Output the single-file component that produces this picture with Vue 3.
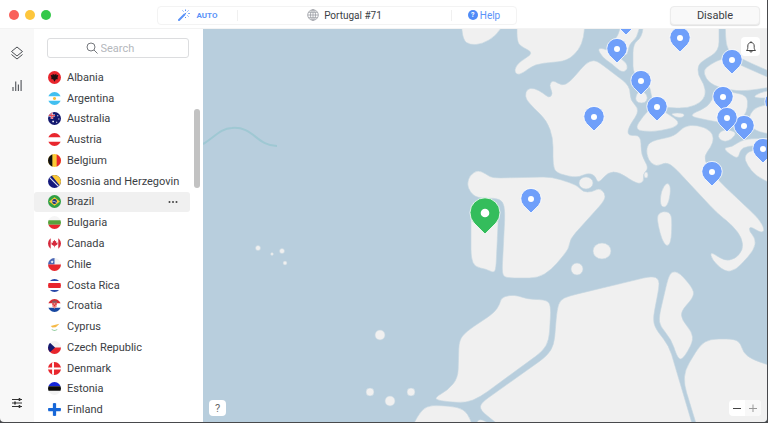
<template>
  <div class="window">
    <header class="titlebar">
      <div class="lights">
        <button class="light red" aria-label="Close"></button>
        <button class="light yellow" aria-label="Minimize"></button>
        <button class="light green" aria-label="Zoom"></button>
      </div>
      <div class="status">
        <button class="auto">
          <svg width="12" height="12" viewBox="0 0 12 12" fill="none" stroke="currentColor">
            <path d="M1 11l5.500-5.500" stroke-width="2" stroke-linecap="round" />
            <path d="M7 5l1.200-1.200M7.500.5v1.500M10.500 1.500l-1 1M11.800 4.500h-1.500M10.500 7.500l-1-1M4.500 1.500l1 1M7.500 8v1" />
          </svg>
          <span>AUTO</span>
        </button>
        <div class="server">
          <svg width="12" height="12" viewBox="0 0 12 12" fill="none" stroke="#9a9da3" stroke-width=".8">
            <circle cx="6" cy="6" r="5.300" />
            <ellipse cx="6" cy="6" rx="2.500" ry="5.300" />
            <path d="M6 .7v10.600M.7 6h10.600M1.500 3.300h9M1.500 8.700h9" />
          </svg>
          <span>Portugal #71</span>
        </div>
        <button class="help"><i>?</i><span>Help</span></button>
      </div>
      <button class="disable">Disable</button>
    </header>

    <div class="body">
      <nav class="rail">
        <button aria-label="Layers">
          <svg width="14" height="14" viewBox="0 0 14 14" fill="none" stroke="#4a4d52" stroke-linejoin="round">
            <path d="M7 1l5.500 4.500L7 10 1.500 5.500z" />
            <path d="M1.500 8.500L7 13l5.500-4.500" />
          </svg>
        </button>
        <button aria-label="Statistics">
          <svg width="14" height="14" viewBox="0 0 14 14" fill="none" stroke="#5c5f64" stroke-width="1.200">
            <path d="M3 13V9M5.700 13V3.500M8.400 13V6.500M11.100 13V2" />
          </svg>
        </button>
        <button class="last" aria-label="Preferences">
          <svg width="12" height="12" viewBox="0 0 12 12" fill="none" stroke="#333">
            <path d="M1 2.500h10M1 6h10M1 9.500h10" />
            <path d="M8.500 1v3M4 4.500v3M8.500 8v3" stroke-width="1.600" />
          </svg>
        </button>
      </nav>

      <aside class="sidebar">
        <label class="search" :class="{ filled: query }">
          <svg width="12" height="12" viewBox="0 0 12 12" fill="none" stroke="#75787d">
            <circle cx="5" cy="5" r="4" />
            <path d="M8 8l3.500 3.500" />
          </svg>
          <input v-model="query" type="text" placeholder="Search" aria-label="Search" />
        </label>
        <ul class="countries">
          <li v-for="c in filtered" :key="c.name" :class="{ active: c.name === selected }" @click="selected = c.name">
            <svg class="flag" width="13" height="13" viewBox="0 0 12 12">
              <clipPath :id="'clip-' + c.id"><circle cx="6" cy="6" r="6" /></clipPath>
              <g :clip-path="`url(#clip-${c.id})`">
                <path v-for="(s, i) in c.flag" :key="i" :fill="s[0]" :d="s[1]" />
              </g>
            </svg>
            <span>{{ c.name }}</span>
            <button v-if="c.name === selected" class="more" aria-label="More">
              <svg width="10" height="4" viewBox="0 0 10 4" fill="#444">
                <circle cx="1.500" cy="2" r="1" />
                <circle cx="5" cy="2" r="1" />
                <circle cx="8.500" cy="2" r="1" />
              </svg>
            </button>
          </li>
        </ul>
        <div class="scrollbar"></div>
      </aside>

      <main class="map">
        <svg class="world" viewBox="203 29 564 393" preserveAspectRatio="xMinYMin slice">
          <path class="route" d="M203 144C213 139 220 128 232 128C253 126 257 146 277 146" />
          <path v-for="(p, i) in land" :key="i" class="land" :d="rounded(p)" />
          <ellipse v-for="(e, i) in islands" :key="'i' + i" class="land" :cx="e[0]" :cy="e[1]" :rx="e[2]" :ry="e[3]" />
          <g v-for="(p, i) in pins" :key="'p' + i" :transform="`translate(${p[0]} ${p[1]})`">
            <path class="pin" d="M0 14L-7.500 6.500A10.200 10.200 0 1 1 7.500 6.500Z" />
            <circle r="3" fill="#fff" />
          </g>
          <g transform="translate(485 213)">
            <path class="pin current" d="M0 21L-11 10A15 15 0 1 1 11 10Z" />
            <circle r="4.300" fill="#fff" />
          </g>
        </svg>
        <button class="tool bell" aria-label="Notifications">
          <svg width="12" height="12" viewBox="0 0 12 12" fill="none" stroke="#444">
            <path d="M1.500 9.500C3 8 2.800 7 2.800 5C2.800 2.800 4.200 1.500 6 1.500S9.200 2.800 9.200 5C9.200 7 9 8 10.500 9.500ZM6 .3v1.200M4.800 10c.3 1.600 2.100 1.600 2.400 0" />
          </svg>
        </button>
        <button class="tool info">?</button>
        <div class="zoom">
          <button aria-label="Zoom out">
            <svg width="8" height="8" viewBox="0 0 8 8" stroke="#444"><path d="M0 4.500h8" /></svg>
          </button>
          <button class="plus" aria-label="Zoom in">
            <svg width="8" height="8" viewBox="0 0 8 8" stroke="#999"><path d="M0 4.500h8M4 .5v8" /></svg>
          </button>
        </div>
      </main>
    </div>
  </div>
</template>

<script setup>
import { ref, computed } from 'vue';

const query = ref('');
const selected = ref('Brazil');

const all = 'M0 0h12v12H0z';
const top3 = 'M0 0h12v4H0z';
const bottom3 = 'M0 8h12v4H0z';

// each flag is a stack of [fill, path] on a 12x12 grid
const countries = [
  { name: 'Albania', flag: [['#e8262d', all], ['#1c1011', 'M6 3.500L8 2.500 7.500 4 9.500 3.800 8.800 6 9 7.500 7.300 7.500 6 10 4.700 7.500 3 7.500 3.200 6 2.500 3.800 4.500 4 4 2.500z']] },
  { name: 'Argentina', flag: [['#fff', all], ['#41bff0', top3], ['#41bff0', bottom3], ['#f6bd3b', 'M6 4.500a1.500 1.500 0 1 0 .01 0z']] },
  { name: 'Australia', flag: [['#14196f', all], ['#fff', 'M0 2.300h6.500v1.900H0zM2.500 0h1.900v6.500H2.500z'], ['#e84b55', 'M0 2.800h6.500v.9H0zM3 0h.9v6.500H3zM1 1l4.500 4.500-.7.5L.5 1.500z'], ['#fff', 'M8.500 3h1v1h-1zM9.500 6h1v1h-1zM4 8h1.500v1.500H4zM7.500 9h1v1h-1z']] },
  { name: 'Austria', flag: [['#fff', all], ['#e8262d', top3], ['#e8262d', bottom3]] },
  { name: 'Belgium', flag: [['#fbca36', all], ['#111', 'M0 0h4v12H0z'], ['#e8262d', 'M8 0h4v12H8z']] },
  { name: 'Bosnia and Herzegovin', flag: [['#14197c', all], ['#fbca36', 'M3 0h9v11z'], ['#dfe4f5', 'M1.500 1.500l9.500 9.500-.8.800L.8 2.300z']] },
  { name: 'Brazil', flag: [['#2f9f45', all], ['#fbca36', 'M6 2l5 4-5 4-5-4z'], ['#26377c', 'M6 3.800a2.200 2.200 0 1 0 .01 0z'], ['#b8c6e3', 'M3.900 5.300q2.500-.1 4.200 1.500l-.2.500q-1.700-1.500-4.100-1.400z']] },
  { name: 'Bulgaria', flag: [['#f5f5f5', all], ['#56a33b', 'M0 4h12v4H0z'], ['#e8262d', bottom3]] },
  { name: 'Canada', flag: [['#fff', all], ['#d5293c', 'M0 0h2.500v12H0zM9.500 0H12v12H9.500zM6 2.500l.8 1.500.8-.4-.2 1.700 1.600-.3-.4 1 .5.500L7 8H6.300v1.500h-.6V8H5L2.900 6.500l.5-.5-.4-1 1.600.3-.2-1.700.8.4z']] },
  { name: 'Chile', flag: [['#f3f3f3', all], ['#4a66b5', 'M0 0h6v6H0z'], ['#fff', 'M3.800 2l.4 1.100h1.100l-.9.7.3 1.100-.9-.6-.9.600.3-1.100-.9-.7h1.100z'], ['#e8262d', 'M0 6h12v6H0z']] },
  { name: 'Costa Rica', flag: [['#fff', all], ['#2848a8', 'M0 0h12v1.900H0zM0 10.100h12V12H0z'], ['#e8262d', 'M0 3.800h12v4.400H0z']] },
  { name: 'Croatia', flag: [['#fff', all], ['#d92930', top3], ['#1747a0', bottom3], ['#ee8d87', 'M4 3h4v4L6 9 4 7z'], ['#8a5961', 'M4 1.500h4V3.500H4z'], ['#d92930', 'M4 4h1.300v1.300H4zM6.600 4H8v1.300H6.600zM5.300 5.300h1.300v1.300H5.300z']] },
  { name: 'Cyprus', flag: [['#fff', all], ['#f5b947', 'M2.500 5.500L6 4.500 10.500 3.500 8.500 5.500 7 6.800 4 7z'], ['#73bd82', 'M3 8q3 2.500 6 0L8 9.500 6 10 4 9.500z']] },
  { name: 'Czech Republic', flag: [['#f3f3f3', all], ['#e8262d', 'M0 6h12v6H0z'], ['#14196f', 'M0 0l6.500 6L0 12z']] },
  { name: 'Denmark', flag: [['#e8262d', all], ['#fff', 'M3.800 0h1.700v12H3.800zM0 5.100h12v1.800H0z']] },
  { name: 'Estonia', flag: [['#f3f3f3', all], ['#1426dc', top3], ['#0b0b0b', 'M0 4h12v4H0z']] },
  { name: 'Finland', flag: [['#fff', all], ['#1767d8', 'M4.500 0h3v12h-3zM0 4.500h12v3H0z']] },
].map((c, id) => ({ ...c, id }));

const filtered = computed(() => {
  const q = query.value.trim().toLowerCase();
  return countries.filter((c) => c.name.toLowerCase().includes(q));
});

// coastlines as corner points, rounded off when drawn
const land = [
  // Ireland, Great Britain
  [[461, 20], [463, 40], [470, 45], [482, 44], [496, 36], [506, 20]],
  [[517, 20], [517, 42], [522, 47], [534, 53], [519, 62], [514, 70], [517, 75], [523, 73], [535, 64], [567, 61], [579, 50], [584, 37], [585, 20]],
  // France
  [[525, 96], [527, 89], [534, 88], [543, 93], [549, 98], [553, 94], [549, 85], [553, 80], [562, 86], [570, 82], [586, 63], [594, 60], [600, 63], [630, 86], [630, 100], [640, 110], [628, 128], [628, 136], [641, 135], [641, 155], [649, 168], [643, 174], [644, 182], [637, 184], [619, 172], [608, 172], [598, 184], [595, 175], [587, 173], [577, 178], [556, 173], [553, 165], [553, 138], [547, 121], [528, 102]],
  // Low countries, Luxembourg
  [[597, 48], [606, 49], [626, 62], [628, 69], [622, 73], [611, 63], [603, 58]],
  [[610, 43], [618, 37], [622, 20], [641, 20], [637, 38], [629, 44], [627, 58]],
  [[635, 99], [638, 91], [645, 92], [648, 98], [645, 103], [638, 103]],
  // Germany
  [[644, 20], [642, 37], [633, 44], [633, 75], [650, 84], [652, 103], [668, 108], [688, 108], [700, 103], [706, 95], [704, 84], [698, 75], [698, 65], [704, 60], [719, 51], [719, 20]],
  // Switzerland, Liechtenstein
  [[634, 130], [643, 116], [654, 105], [668, 114], [680, 122], [674, 128], [652, 132]],
  [[670, 113], [685, 113], [683, 118], [675, 117]],
  // Poland, Czechia, Austria
  [[725, 20], [726, 45], [730, 52], [744, 60], [780, 76], [780, 20]],
  [[703, 73], [707, 66], [725, 57], [740, 65], [786, 85], [745, 91], [728, 90], [710, 84]],
  [[688, 116], [709, 106], [714, 95], [724, 91], [747, 95], [748, 107], [744, 117], [733, 124], [717, 122]],
  // Balkans
  [[718, 134], [724, 129], [737, 132], [732, 139], [725, 142], [719, 139]],
  [[752, 98], [760, 92], [780, 89], [780, 98]],
  [[750, 114], [756, 107], [780, 102], [780, 136], [755, 131], [748, 122]],
  [[722, 148], [732, 147], [743, 139], [780, 138], [780, 145], [747, 146], [740, 150], [738, 160]],
  [[744, 156], [751, 150], [780, 150], [780, 188], [756, 176], [747, 165]],
  // Italy
  [[646, 148], [651, 141], [675, 136], [684, 126], [697, 125], [710, 130], [714, 138], [711, 147], [704, 156], [707, 166], [720, 182], [759, 219], [765, 230], [761, 233], [750, 226], [749, 231], [756, 239], [754, 250], [736, 270], [725, 272], [712, 260], [710, 251], [724, 261], [735, 259], [743, 250], [742, 238], [733, 226], [716, 212], [674, 167], [666, 162], [656, 167], [648, 160]],
  // Corsica, Sardinia
  [[667, 182], [671, 187], [669, 202], [665, 208], [660, 205], [661, 191]],
  [[663, 211], [671, 213], [672, 224], [671, 242], [667, 247], [662, 240], [658, 225], [657, 215]],
  // Iberia
  [[467, 184], [470, 175], [478, 170], [486, 174], [492, 178], [552, 177], [577, 185], [583, 192], [592, 192], [599, 188], [605, 193], [605, 200], [570, 239], [569, 249], [551, 270], [538, 278], [506, 278], [502, 274], [505, 212], [503, 201], [495, 198], [477, 198], [470, 192]],
  [[471, 210], [472, 202], [490, 200], [499, 203], [496, 268], [494, 273], [486, 269], [475, 267], [471, 258]],
  // Maghreb
  [[434, 398], [448, 390], [458, 378], [459, 340], [467, 331], [494, 313], [500, 304], [501, 298], [510, 295], [519, 296], [527, 299], [548, 300], [551, 308], [549, 340], [543, 351], [480, 397], [466, 403], [440, 401]],
  [[557, 310], [560, 300], [569, 296], [652, 276], [659, 279], [659, 288], [653, 318], [655, 328], [669, 346], [694, 430], [505, 430], [480, 410], [481, 403], [547, 356], [554, 345]],
  [[668, 278], [672, 271], [680, 273], [694, 290], [693, 298], [681, 311], [682, 320], [692, 332], [693, 342], [683, 359], [678, 359], [671, 339], [660, 326], [659, 317]],
  [[698, 430], [684, 384], [685, 370], [700, 345], [710, 339], [735, 339], [741, 344], [743, 352], [751, 359], [780, 369], [780, 430]],
  [[410, 430], [422, 409], [432, 405], [458, 407], [468, 413], [474, 430]],
  [[475, 430], [478, 417], [500, 430]],
];

const islands = [
  [586, 183, 7, 6],
  [646, 175, 2, 3],
  [602, 251, 9, 8],
  [577, 269, 6, 6],
  [258, 248, 2.5, 2.5],
  [272, 254, 1.5, 1.5],
  [282, 251, 2.5, 2.5],
  [285, 263, 2, 2],
  [380, 335, 5, 5],
  [370, 392, 4, 4],
  [390, 401, 5, 5],
  [411, 392, 4, 4],
];

const pins = [
  [626, 21], [617, 49], [680, 38], [732, 60], [641, 81], [657, 107], [594, 117], [723, 97],
  [744, 126], [727, 118], [763, 149], [712, 172], [531, 199], [773, 21], [775, 102],
];

function rounded(points) {
  const n = points.length;
  let d = '';
  for (let i = 0; i < n; i++) {
    const p = points[i];
    const a = toward(p, points[(i + n - 1) % n]);
    const b = toward(p, points[(i + 1) % n]);
    d += `${i ? 'L' : 'M'}${a}Q${p.join(' ')} ${b}`;
  }
  return d + 'Z';
}

function toward(from, to) {
  const dx = to[0] - from[0];
  const dy = to[1] - from[1];
  const len = Math.hypot(dx, dy);
  const t = Math.min(0.5, 9 / len);
  return `${(from[0] + dx * t).toFixed(1)} ${(from[1] + dy * t).toFixed(1)}`;
}
</script>

<style>
body {
  background: #48494c;
}
</style>

<style scoped>
.window {
  display: flex;
  flex-direction: column;
  box-sizing: border-box;
  height: 100vh;
  padding: 0 1px 1px 0;
  overflow: hidden;
  font-family: Roboto, "Liberation Sans", sans-serif;
  font-size: 11px;
  color: #3b3e44;
}

button {
  display: flex;
  align-items: center;
  justify-content: center;
  padding: 0;
  border: none;
  background: none;
  font: inherit;
  color: inherit;
  cursor: pointer;
}

.titlebar {
  display: flex;
  align-items: center;
  justify-content: space-between;
  flex-shrink: 0;
  box-sizing: border-box;
  height: 29px;
  padding: 2px 7px 0 9px;
  border-bottom: 1px solid #f3f3f3;
  background: #fff;
}

.lights {
  display: flex;
  gap: 6px;
  width: 148px;
}

.light {
  width: 10px;
  height: 10px;
  border-radius: 50%;
}

.red {
  background: #f9605a;
}

.yellow {
  background: #fdc63c;
}

.green {
  background: #34c84a;
}

.status {
  display: flex;
  flex: 1;
  max-width: 360px;
  margin-right: auto;
  box-sizing: border-box;
  height: 19px;
  border: 1px solid #f3f3f3;
  border-radius: 4px;
}

.auto {
  gap: 7px;
  width: 79px;
  font-size: 8px;
  font-weight: 700;
  color: #5b93f8;
}

.server {
  display: flex;
  flex: 1;
  align-items: center;
  justify-content: center;
  gap: 5px;
  margin: 3px 0;
  border: solid #f0f0f0;
  border-width: 0 1px;
  font-size: 10px;
  color: #3b3e44;
}

.help {
  gap: 2px;
  width: 64px;
  font-size: 10px;
  color: #5b93f8;
}

.help i {
  width: 10px;
  border-radius: 50%;
  background: #4f8bf7;
  font-size: 7px;
  font-style: normal;
  font-weight: 700;
  line-height: 10px;
  text-align: center;
  color: #fff;
}

.disable {
  width: 90px;
  height: 19px;
  border: 1px solid #ececec;
  border-radius: 4px;
  background: #f9f9f9;
  box-shadow: 0 1px 1px #e2e2e2;
}

.body {
  display: flex;
  flex: 1;
  min-height: 0;
}

.rail {
  display: flex;
  flex-direction: column;
  align-items: center;
  gap: 18px;
  box-sizing: border-box;
  width: 34px;
  padding: 17px 0 13px;
  border-bottom-left-radius: 4px;
  background: #f8f8f8;
}

.rail .last {
  margin-top: auto;
}

.sidebar {
  position: relative;
  box-sizing: border-box;
  width: 169px;
  padding-top: 9px;
  overflow: hidden;
  background: #fff;
}

.search {
  display: flex;
  align-items: center;
  justify-content: center;
  gap: 3px;
  box-sizing: border-box;
  height: 20px;
  margin: 0 14px 9px 13px;
  border: 1px solid #dcdddf;
  border-radius: 3px;
}

.search input {
  width: 50px;
  padding: 1px 0 0;
  border: none;
  outline: none;
  background: none;
  font: inherit;
  color: #3b3e44;
}

.search.filled input {
  width: 100px;
}

.search input::placeholder {
  color: #b4b7bc;
  opacity: 1;
}

.countries {
  display: grid;
  grid-template-columns: minmax(0, 1fr);
  grid-auto-rows: 1fr;
  height: 353px;
  margin: 0 13px 0 0;
  padding: 0;
  list-style: none;
}

.countries li {
  display: flex;
  align-items: center;
  gap: 6px;
  padding: 0 12px 0 14px;
  border-radius: 3px;
  white-space: nowrap;
}

.countries li.active {
  background: #f0f0f0;
}

.flag {
  flex-shrink: 0;
}

.more {
  margin-left: auto;
}

.scrollbar {
  position: absolute;
  top: 80px;
  right: 3px;
  width: 6px;
  height: 79px;
  border-radius: 3px;
  background: #c2c2c2;
}

.map {
  position: relative;
  flex: 1;
  min-width: 0;
  overflow: hidden;
  border-bottom-right-radius: 4px;
  background: #b8cedd;
}

.world {
  display: block;
  width: 100%;
  height: 100%;
}

.land {
  fill: #f0f0f0;
  stroke: #c6d6e1;
  stroke-width: .6;
}

.route {
  fill: none;
  stroke: #9fc8d3;
  stroke-width: 2;
}

.pin {
  fill: #6f9ffa;
  stroke: #fff;
  stroke-width: .8;
}

.pin.current {
  fill: #34bd5c;
}

.tool {
  position: absolute;
  border-radius: 4px;
  background: #fff;
}

.bell {
  top: 8px;
  right: 7px;
  width: 19px;
  height: 19px;
}

.info {
  bottom: 6px;
  left: 6px;
  width: 17px;
  height: 16px;
  color: #666;
}

.zoom {
  position: absolute;
  right: 6px;
  bottom: 6px;
  display: flex;
  border-radius: 4px;
  overflow: hidden;
  background: #fff;
}

.zoom button {
  width: 16px;
  height: 16px;
}

.zoom .plus {
  background: #f8f8f8;
}
</style>
